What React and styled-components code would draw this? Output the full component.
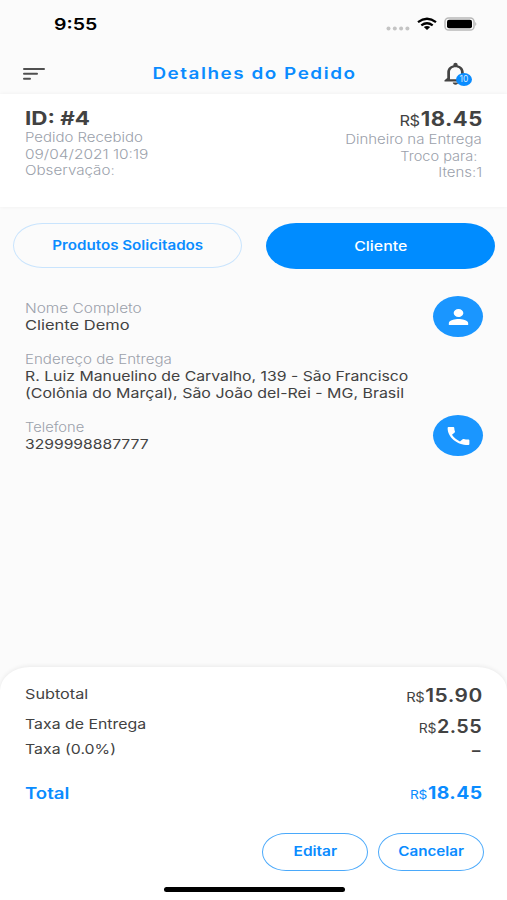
import React from "react"
import styled, { createGlobalStyle } from "styled-components"
import { MdNotificationsNone, MdPerson, MdPhone } from "react-icons/md"

const blue = "#0a8cff"
const dark = "#424242"
const grey = "#9ba1ab"

const GlobalStyle = createGlobalStyle`
  * {
    box-sizing: border-box;
  }
  body {
    margin: 0;
    background: #fbfbfb;
    font-family: Inter, "Liberation Sans", sans-serif;
    color: ${dark};
  }
`

const Screen = styled.div`
  width: 507px;
  height: 900px;
  display: flex;
  flex-direction: column;
  overflow: hidden;
  background: #fbfbfb;
`

// wide lettering: the glyphs are stretched sideways from one edge
const Text = styled.span`
  display: block;
  white-space: pre;
  font-size: ${p => p.$size || 13}px;
  line-height: ${p => p.$line || 17}px;
  font-weight: ${p => p.$weight || 400};
  color: ${p => p.$color || "inherit"};
  letter-spacing: ${p => p.$track || 0}px;
  transform: scaleX(${p => p.$wide || 1.15});
  transform-origin: ${p => p.$from || "left"} center;
`

const Muted = styled(Text)`
  color: ${grey};
  font-weight: 300;
`

const StatusBar = styled.div`
  height: 48px;
  padding: 0 30px 0 54px;
  display: flex;
  align-items: center;
  justify-content: space-between;
  color: #000;
`

const StatusIcons = styled.svg`
  width: 92px;
  height: 14px;
`

const AppBar = styled.header`
  height: 46px;
  padding: 5px 32px 0 23px;
  display: grid;
  grid-template-columns: 34px 1fr 34px;
  align-items: center;
`

const MenuIcon = styled.svg`
  width: 22px;
  height: 14px;
`

const Title = styled.h1`
  margin: 0 0 0 10px;
  display: flex;
  justify-content: center;
`

const Bell = styled.div`
  position: relative;
  width: 33px;
  height: 27px;
  margin-left: -2px;
  color: #444;
  svg {
    display: block;
    width: 33px;
    height: 27px;
  }
`

const Badge = styled.span`
  position: absolute;
  left: 17px;
  top: 13px;
  width: 16px;
  height: 13px;
  border-radius: 50%;
  background: ${blue};
  color: #cfe8ff;
  font-size: 8.5px;
  line-height: 12px;
  text-align: center;
`

const Summary = styled.section`
  height: 113px;
  padding: 14px 25px 0;
  display: flex;
  justify-content: space-between;
  background: #fff;
  box-shadow: 0 0 4px rgba(0, 0, 0, 0.05);
`

const Column = styled.div`
  display: flex;
  flex-direction: column;
  align-items: ${p => (p.$end ? "flex-end" : "flex-start")};
`

const Money = styled.div`
  display: flex;
  align-items: baseline;
  height: 23px;
  transform: scaleX(${p => p.$wide || 1.13});
  transform-origin: right center;
  font-size: ${p => p.$size}px;
  line-height: ${p => p.$line || 22}px;
  font-weight: ${p => p.$weight || 600};
  color: ${p => p.$color || dark};
  letter-spacing: 0.4px;
  margin-right: -0.4px;
  small {
    font-size: ${p => p.$small || 13}px;
    font-weight: 400;
    letter-spacing: -0.4px;
    margin-right: 1px;
  }
`

const Tabs = styled.nav`
  display: flex;
  justify-content: space-between;
  align-items: flex-start;
  padding: 16px 12px 0 13px;
`

const Tab = styled.button`
  width: 229px;
  height: ${p => (p.$active ? 46 : 45)}px;
  padding: 0;
  display: flex;
  align-items: center;
  justify-content: center;
  border: ${p => (p.$active ? "0" : "1px solid #c9e4fd")};
  border-radius: 30px / 23px;
  background: ${p => (p.$active ? "#008cff" : "transparent")};
  color: ${p => (p.$active ? "#fff" : blue)};
  font-family: inherit;
`

const Details = styled.section`
  flex: 1;
  padding: 27px 24px 0 25px;
`

const InfoRow = styled.div`
  display: flex;
  justify-content: space-between;
  align-items: flex-start;
  height: ${p => p.$height}px;
`

const InfoText = styled.div`
  padding-top: 4px;
`

const RoundButton = styled.button`
  flex: none;
  width: 50px;
  height: 41px;
  padding: 0;
  border: 0;
  border-radius: 50%;
  background: #1a96ff;
  color: #fff;
  display: flex;
  align-items: center;
  justify-content: center;
  svg {
    width: 29px;
    height: 24px;
  }
`

const Totals = styled.footer`
  height: 233px;
  padding: 16px 25px 0;
  display: flex;
  flex-direction: column;
  background: #fff;
  border-radius: 30px 30px 0 0 / 24px 24px 0 0;
  box-shadow: 0 -1px 4px rgba(0, 0, 0, 0.07);
`

const TotalRow = styled.div`
  display: flex;
  justify-content: space-between;
  height: ${p => p.$height}px;
`

const Actions = styled.div`
  display: flex;
  justify-content: flex-end;
  gap: 10px;
  margin-right: -2px;
`

const Outline = styled.button`
  width: 106px;
  height: 38px;
  padding: 0 0 1px;
  display: flex;
  align-items: center;
  justify-content: center;
  border: 1px solid #4aa9fb;
  border-radius: 24px / 19px;
  background: #fff;
  color: ${blue};
  font-family: inherit;
`

const HomeBar = styled.div`
  width: 181px;
  height: 5px;
  margin: 16px auto 0 139px;
  border-radius: 3px;
  background: #000;
`

const App = () => (
  <Screen>
    <GlobalStyle />
    <StatusBar>
      <Text $size={16} $line={18} $weight={600} $wide={1.22}>9:55</Text>
      <StatusIcons viewBox="0 0 92 14">
        <g fill="#c4c4c4">
          <circle cx="3.5" cy="11.5" r="2" />
          <circle cx="9.8" cy="11.5" r="2" />
          <circle cx="16.1" cy="11.5" r="2" />
          <circle cx="22.4" cy="11.5" r="2" />
        </g>
        <g fill="none" stroke="#000" strokeWidth="2.3">
          <path d="M33 5.2 Q42 -1.6 51 5.2" />
          <path d="M36.3 8.4 Q42 4.2 47.7 8.4" />
        </g>
        <path d="M38.8 10 Q42 7.9 45.2 10 L42 13z" fill="#000" />
        <rect x="60" y="1" width="29" height="12" rx="3.6" fill="#fbfbfb" stroke="#b9b9b9" strokeWidth="1.5" />
        <rect x="62" y="2.7" width="25" height="8.6" rx="2" fill="#000" />
        <path d="M90.3 5 Q92.4 7 90.3 9z" fill="#b0b0b0" />
      </StatusIcons>
    </StatusBar>

    <AppBar>
      <MenuIcon viewBox="0 0 22 14">
        <g stroke="#505050" strokeWidth="2" strokeLinecap="round">
          <path d="M1 2h20" />
          <path d="M1 6.8h13" />
          <path d="M1 11.7h6" />
        </g>
      </MenuIcon>
      <Title>
        <Text $size={16} $weight={600} $color={blue} $track={1.3} $wide={1.18} $from="center">Detalhes do Pedido</Text>
      </Title>
      <Bell>
        <MdNotificationsNone preserveAspectRatio="none" />
        <Badge>10</Badge>
      </Bell>
    </AppBar>

    <Summary>
      <Column>
        <Text $size={19} $weight={700} $line={21} $wide={1.18}>ID: #4</Text>
        <Muted $line={16.5}>Pedido Recebido</Muted>
        <Muted $line={16.5} $wide={1.19}>09/04/2021 10:19</Muted>
        <Muted $line={16.5} $wide={1.165}>Observação:</Muted>
      </Column>
      <Column $end>
        <Money $size={19.5} $weight={700} $small={14.5}><small>R$</small>18.45</Money>
        <Muted $line={16.5} $from="right">Dinheiro na Entrega</Muted>
        <Muted $line={16.5} $from="right" $wide={1.12}>{"Troco para: "}</Muted>
        <Muted $line={16.5} $from="right">Itens:1</Muted>
      </Column>
    </Summary>

    <Tabs>
      <Tab>
        <Text $weight={600} $wide={1.165} $from="center">Produtos Solicitados</Text>
      </Tab>
      <Tab $active>
        <Text $weight={500} $wide={1.22} $from="center">Cliente</Text>
      </Tab>
    </Tabs>

    <Details>
      <InfoRow $height={51}>
        <InfoText>
          <Muted $wide={1.185}>Nome Completo</Muted>
          <Text $size={13.5} $wide={1.22}>Cliente Demo</Text>
        </InfoText>
        <RoundButton>
          <MdPerson preserveAspectRatio="none" />
        </RoundButton>
      </InfoRow>
      <InfoRow $height={68}>
        <InfoText>
          <Muted $wide={1.16}>Endereço de Entrega</Muted>
          <Text $size={13.5} $wide={1.17}>R. Luiz Manuelino de Carvalho, 139 - São Francisco</Text>
          <Text $size={13.5} $wide={1.182}>(Colônia do Marçal), São João del-Rei - MG, Brasil</Text>
        </InfoText>
      </InfoRow>
      <InfoRow $height={41}>
        <InfoText>
          <Muted $wide={1.13}>Telefone</Muted>
          <Text $size={13.5} $wide={1.16}>3299998887777</Text>
        </InfoText>
        <RoundButton>
          <MdPhone preserveAspectRatio="none" />
        </RoundButton>
      </InfoRow>
    </Details>

    <Totals>
      <TotalRow $height={31}>
        <Text $size={13.5} $line={22} $wide={1.2}>Subtotal</Text>
        <Money $size={18.5} $line={25}><small>R$</small>15.90</Money>
      </TotalRow>
      <TotalRow $height={25}>
        <Text $size={13.5} $line={21} $wide={1.175}>Taxa de Entrega</Text>
        <Money $size={18.5} $line={24} $wide={1.07}><small>R$</small>2.55</Money>
      </TotalRow>
      <TotalRow $height={43}>
        <Text $size={13.5} $line={21} $wide={1.175}>Taxa (0.0%)</Text>
        <Money $size={16} $line={23} $wide={1.6}>-</Money>
      </TotalRow>
      <TotalRow $height={51}>
        <Text $size={15.5} $weight={600} $line={23} $wide={1.2} $color={blue}>Total</Text>
        <Money $size={17} $weight={700} $small={12} $wide={1.14} $color={blue}><small>R$</small>18.45</Money>
      </TotalRow>
      <Actions>
        <Outline>
          <Text $weight={600} $wide={1.19} $from="center">Editar</Text>
        </Outline>
        <Outline>
          <Text $weight={600} $wide={1.17} $from="center">Cancelar</Text>
        </Outline>
      </Actions>
      <HomeBar />
    </Totals>
  </Screen>
)

export default App
